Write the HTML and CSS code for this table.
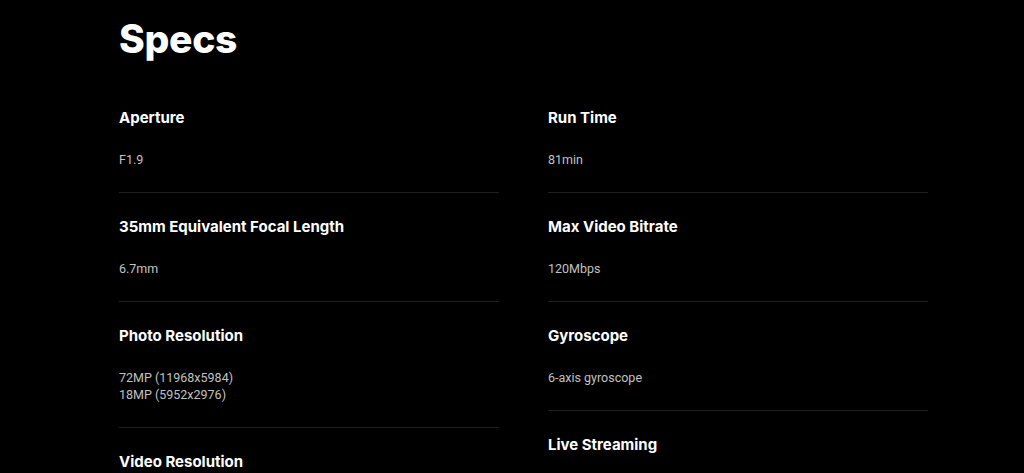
FILE: index.html
```html
<!DOCTYPE html>
<html lang="en">
<head>
<meta charset="utf-8">
<title>Specs</title>
<link rel="stylesheet" href="styles.css">
</head>
<body>
<section class="specs">
  <h2 class="specs-title">Specs</h2>
  <div class="specs-grid">
    <div class="specs-col">
      <div class="spec">
        <h3 class="spec-label">Aperture</h3>
        <p class="spec-value">F1.9</p>
      </div>
      <div class="spec">
        <h3 class="spec-label">35mm Equivalent Focal Length</h3>
        <p class="spec-value">6.7mm</p>
      </div>
      <div class="spec">
        <h3 class="spec-label">Photo Resolution</h3>
        <p class="spec-value">72MP (11968x5984)<br>18MP (5952x2976)</p>
      </div>
      <div class="spec">
        <h3 class="spec-label">Video Resolution</h3>
        <p class="spec-value">5.7K@30fps</p>
      </div>
    </div>
    <div class="specs-col">
      <div class="spec">
        <h3 class="spec-label">Run Time</h3>
        <p class="spec-value">81min</p>
      </div>
      <div class="spec">
        <h3 class="spec-label">Max Video Bitrate</h3>
        <p class="spec-value">120Mbps</p>
      </div>
      <div class="spec">
        <h3 class="spec-label">Gyroscope</h3>
        <p class="spec-value">6-axis gyroscope</p>
      </div>
      <div class="spec">
        <h3 class="spec-label">Live Streaming</h3>
        <p class="spec-value">1440p</p>
      </div>
    </div>
  </div>
</section>
</body>
</html>
```

FILE: styles.css
```css
html, body {
  margin: 0;
  padding: 0;
  background: #000;
  color: #fff;
}

body {
  font-family: Inter, "Noto Sans", sans-serif;
}

.specs {
  width: 809px;
  padding: 0 0 0 119px;
}

.specs-title {
  margin: 0;
  padding-top: 14px;
  font-size: 39px;
  line-height: 50px;
  font-weight: 800;
  letter-spacing: -0.3px;
}

.specs-grid {
  display: grid;
  grid-template-columns: 380px 380px;
  column-gap: 49px;
  margin-top: 20px;
}

.specs-col {
  display: flex;
  flex-direction: column;
}

.spec {
  padding: 22px 0 24px;
  border-bottom: 1px solid #1f1f1f;
}

.spec-label {
  margin: 0;
  font-size: 15px;
  line-height: 24px;
  font-weight: 700;
}

.spec-value {
  margin: 21px 0 0;
  font-family: Roboto, "Liberation Sans", sans-serif;
  font-size: 12.5px;
  line-height: 17px;
  color: #c2c2c2;
}
```
